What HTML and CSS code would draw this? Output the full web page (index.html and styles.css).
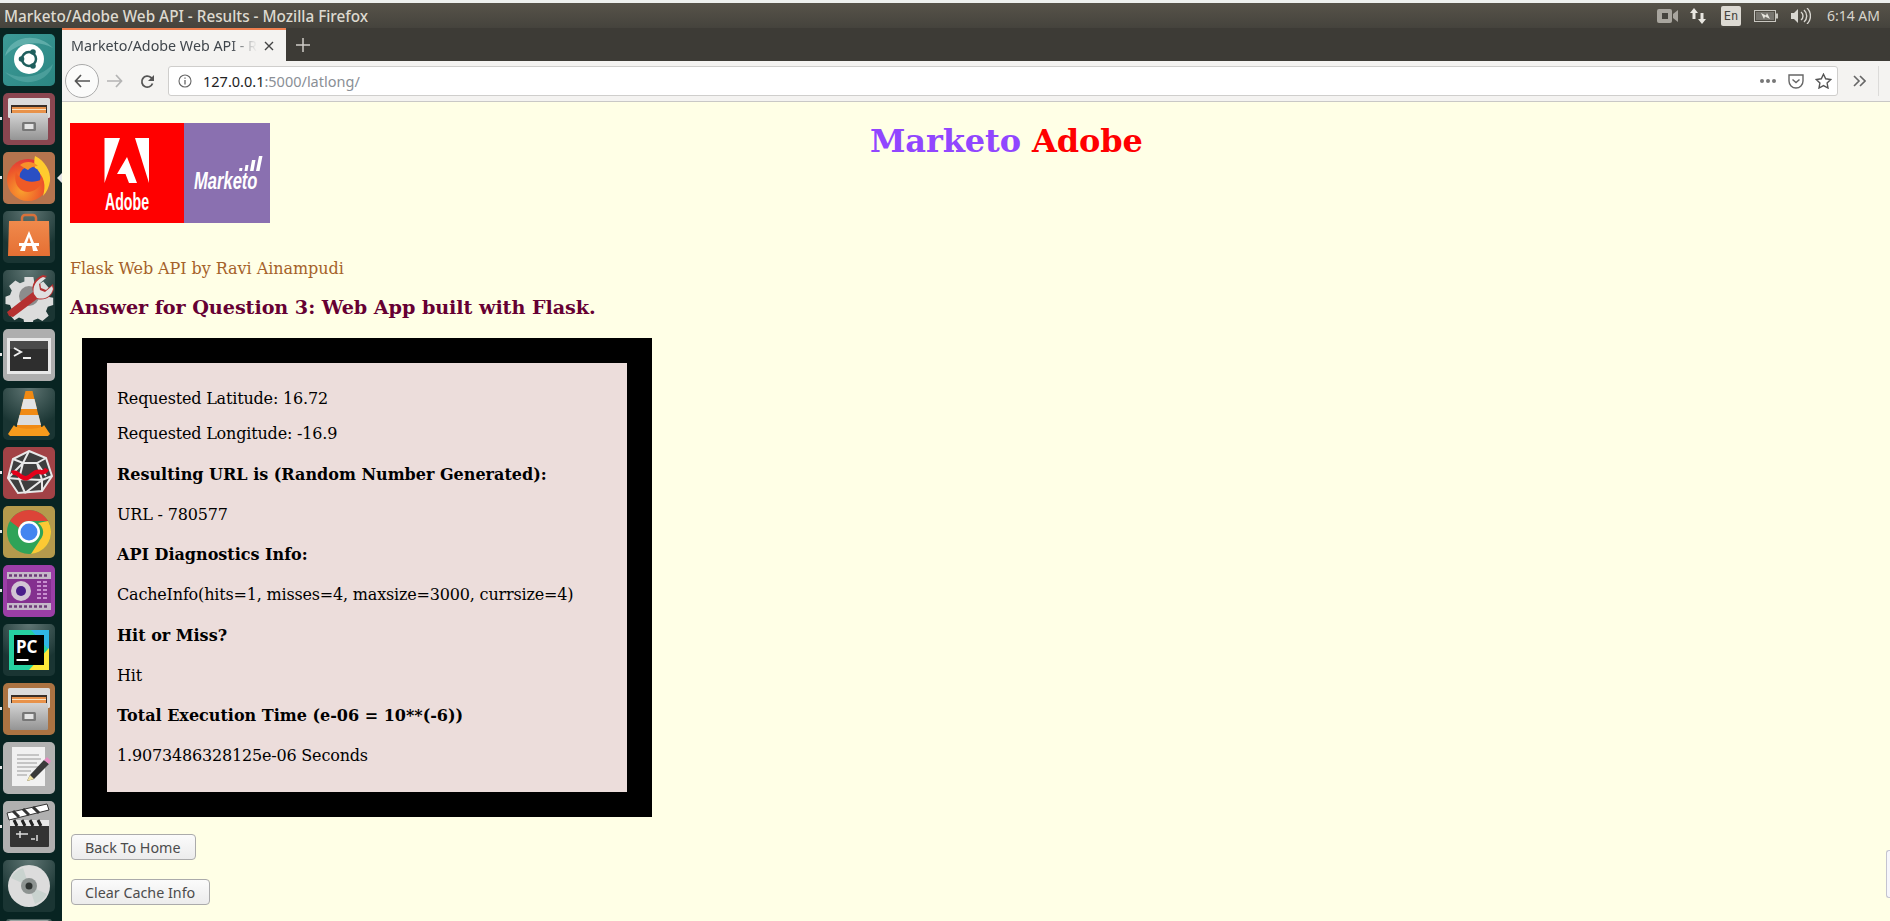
FILE: index.html
```html
<!DOCTYPE html>
<html lang="en">
<head>
<meta charset="utf-8">
<title>Marketo/Adobe Web API - Results</title>
<link rel="stylesheet" href="styles.css">
</head>
<body>
<svg class="defs" width="0" height="0" aria-hidden="true">
  <defs>
    <radialGradient id="glow" cx="50%" cy="0%" r="75%"><stop offset="0" stop-color="#5f7573"/><stop offset="1" stop-color="#1a3533"/></radialGradient>
    <radialGradient id="fox" cx="35%" cy="75%" r="80%"><stop offset="0" stop-color="#f9a12e"/><stop offset=".6" stop-color="#ee5a2a"/><stop offset="1" stop-color="#e0303a"/></radialGradient>
    <linearGradient id="cab" x1="0" y1="0" x2="0" y2="1"><stop offset="0" stop-color="#d4d4d4"/><stop offset="1" stop-color="#949494"/></linearGradient>
    <linearGradient id="teal" x1="0" y1="0" x2="1" y2="1"><stop offset="0" stop-color="#3d9a97"/><stop offset="1" stop-color="#2b8682"/></linearGradient>
    <linearGradient id="bag" x1="0" y1="0" x2="0" y2="1"><stop offset="0" stop-color="#f08a4c"/><stop offset="1" stop-color="#e56f33"/></linearGradient>
    <g id="cabinet">
      <rect x="5" y="5" width="42" height="20" rx="1.500" fill="#dcdcdc"/>
      <rect x="8" y="12" width="36" height="12" fill="#3b3029"/>
      <rect x="9" y="14" width="34" height="7" fill="#e8924a"/>
      <rect x="9" y="16" width="34" height="1" fill="#fbe3c2"/>
      <rect x="7" y="20" width="38" height="27" rx="1.500" fill="url(#cab)"/>
      <rect x="19" y="29" width="14" height="9" rx="1.500" fill="#777"/>
      <rect x="21.500" y="31" width="9" height="5" fill="#e4e4e4"/>
    </g>
  </defs>
</svg>

<header class="titlebar">
  <span class="wintitle">Marketo/Adobe Web API - Results - Mozilla Firefox</span>
  <div class="tray">
    <svg class="tray-cam" width="22" height="14" viewBox="0 0 22 14"><rect x="0" y="0" width="15" height="14" rx="2" fill="#a8a59e"/><rect x="5" y="4" width="6" height="6" fill="#45433e"/><path d="M16 5l5-4v12l-5-4z" fill="#a8a59e"/></svg>
    <svg class="tray-net" width="18" height="18" viewBox="0 0 18 18"><path d="M5 1l4 5H6.500v6h-3V6H1z" fill="#e8e6e0"/><path d="M13 17l-4-5h2.500V6h3v6H17z" fill="#e8e6e0"/></svg>
    <span class="tray-lang">En</span>
    <svg class="tray-bat" width="24" height="12" viewBox="0 0 24 12"><rect x=".5" y=".5" width="21" height="11" fill="none" stroke="#c8c6c0"/><rect x="2" y="2" width="18" height="8" fill="#77756f"/><rect x="22" y="3.500" width="2" height="5" fill="#c8c6c0"/><path d="M7 3l5 2.500 1-2.500 3 6-5-2.500-1 2.500z" fill="#e8e6e0"/></svg>
    <svg class="tray-vol" width="20" height="16" viewBox="0 0 20 16"><path d="M0 5h3l4-4v14l-4-4H0z" fill="#d8d6d0"/><path d="M10 4a5 5 0 0 1 0 8M13 2a8 8 0 0 1 0 12M16 0a11 11 0 0 1 0 16" fill="none" stroke="#d8d6d0" stroke-width="1.400"/></svg>
    <span class="clock">6:14 AM</span>
  </div>
</header>

<div class="desktop">
  <nav class="launcher">
    <div class="tile"><svg viewBox="0 0 52 52"><rect width="52" height="52" rx="5" fill="url(#teal)"/><path d="M2 22C6 4 32-4 50 14 36 6 14 8 2 22z" fill="#7fc2bf" opacity=".55"/><path d="M50 30C46 48 20 56 2 38 16 46 38 44 50 30z" fill="#7fc2bf" opacity=".35"/><circle cx="26" cy="25" r="15" fill="#fff"/><circle cx="26" cy="25" r="7" fill="none" stroke="#1f5f5e" stroke-width="2.500"/><circle cx="18.500" cy="25" r="2.800" fill="#1f5f5e"/><circle cx="30" cy="18" r="2.800" fill="#1f5f5e"/><circle cx="30" cy="32" r="2.800" fill="#1f5f5e"/></svg></div>
    <div class="tile pip"><svg viewBox="0 0 52 52"><rect width="52" height="52" rx="5" fill="#8a4650"/><use href="#cabinet"/></svg></div>
    <div class="tile pip active"><svg viewBox="0 0 52 52"><rect width="52" height="52" rx="5" fill="#b4744e"/><circle cx="25" cy="28" r="21" fill="url(#fox)"/><path d="M32 4c10 5 16 15 15 25-1 6-3 11-7 15 3-10 2-20-8-27-1-5-1-9 0-13z" fill="#ffcb2e"/><circle cx="27" cy="25" r="10.500" fill="#2a4fc4"/><path d="M13 20c4 8 14 13 27 7-3 11-14 16-22 11-5-4-7-11-5-18z" fill="#ef5a26"/><path d="M17 13c5-4 13-4 18 1-5 0-8 2-10 4-3-2-6-3-8-5z" fill="#f7902a"/></svg></div>
    <div class="tile"><svg viewBox="0 0 52 52"><rect width="52" height="52" rx="5" fill="url(#glow)"/><path d="M19 13V7a3 3 0 0 1 3-3h8a3 3 0 0 1 3 3v6" fill="none" stroke="#d9713a" stroke-width="2.500"/><path d="M6 10h40l1 35H5z" fill="url(#bag)"/><path d="M26 20l5 12h5v3h-3l2 5h-5l-1-5h-6l-1 5h-5l2-5h-3v-3h5zM26 26l-2 6h4z" fill="#fff"/></svg></div>
    <div class="tile"><svg viewBox="0 0 52 52"><rect width="52" height="52" rx="5" fill="url(#glow)"/><path d="M21 5h10l1 6 5 2 5-3 6 7-3 5 2 5 6 1v8l-6 2-2 5 3 5-7 6-5-3-5 2-1 4H21l-1-5-5-2-5 3-6-7 3-5-2-5-5-1V27l5-2 2-5-3-5 7-6 5 3 5-2z" fill="#dcdcdc" transform="translate(2.500 2.500) scale(.9)"/><circle cx="26" cy="26" r="10" fill="#8c8c8c"/><path d="M6 46l-2-4 26-20c-2-7 2-14 10-17l4 1-7 6 1 6 5 2 7-6 1 5c-2 8-9 12-17 10L10 47z" fill="#b53030"/><path d="M31 24c-2-7 2-14 9-17l3 1-7 6 1 6 5 2 7-6 1 3c-2 8-9 11-16 9z" fill="#e0e0e0"/></svg></div>
    <div class="tile pip"><svg viewBox="0 0 52 52"><rect width="52" height="52" rx="5" fill="#aeaeae"/><rect x="4" y="9" width="44" height="36" fill="#e8e8e8"/><rect x="7" y="12" width="38" height="30" fill="#2e2e2e"/><rect x="7" y="12" width="38" height="8" fill="#4a4a4a"/><path d="M11 19l7 4-7 4" fill="none" stroke="#eee" stroke-width="2"/><rect x="20" y="28" width="8" height="2" fill="#eee"/></svg></div>
    <div class="tile"><svg viewBox="0 0 52 52"><rect width="52" height="52" rx="5" fill="url(#glow)"/><path d="M22.500 3h7L39 42H13z" fill="#f08a14"/><path d="M20.500 11h11l2.500 10H18z" fill="#e4e4e4"/><path d="M16.500 27h19l2.500 10H14z" fill="#dcdcdc"/><path d="M11 37l-6 9 2 2h38l2-2-6-9c-2 5-28 5-30 0z" fill="#f79a1c"/></svg></div>
    <div class="tile pip"><svg viewBox="0 0 52 52"><rect width="52" height="52" rx="5" fill="#a24246"/><path d="M26 4l17 7 6 18-10 15-24 2L5 31l5-19z" fill="#3e3e3e" stroke="#e8e8e8" stroke-width="2"/><path d="M26 4l-6 12-10-4m10 4l-15 15m15-15l14 0 9 13M34 16l9-5M20 16l-4 16 6 14M16 32l-11-1M34 16l5 17-17 13M39 33l10-4M39 33v11M16 32l23 1" fill="none" stroke="#e8e8e8" stroke-width="2"/><path d="M9 26c6-3 8 7 15 5 6-2 7-8 13-6 3 1 5 0 7-3" fill="none" stroke="#e4001a" stroke-width="4.500"/></svg></div>
    <div class="tile pip"><svg viewBox="0 0 52 52"><rect width="52" height="52" rx="5" fill="#b49a4c"/><circle cx="26" cy="26" r="22" fill="#2fa358"/><path d="M7 15A22 22 0 0 1 45 15H26a11 11 0 0 0-10 7z" fill="#dc4438"/><path d="M45 15a22 22 0 0 1-17 33l9-14a11 11 0 0 0-2-17z" fill="#fcc934"/><circle cx="26" cy="26" r="11" fill="#fff"/><circle cx="26" cy="26" r="8.500" fill="#4285f0"/></svg></div>
    <div class="tile pip"><svg viewBox="0 0 52 52"><rect width="52" height="52" rx="5" fill="#9b3ea6"/><rect x="4" y="7" width="44" height="38" rx="2" fill="#84308f"/><rect x="4" y="7" width="44" height="7" fill="#c4b8c8"/><rect x="4" y="38" width="44" height="7" fill="#c4b8c8"/><path d="M6 10.500h40M6 41.500h40" stroke="#6d3a78" stroke-width="2.500" stroke-dasharray="3 2"/><circle cx="18" cy="26" r="10" fill="#d2c6d4"/><circle cx="18" cy="26" r="5" fill="#4a1f8a"/><path d="M34 17h4M34 21h4M34 25h4M34 29h4M34 33h4M40 17h4M40 21h4M40 25h4M40 29h4M40 33h4" stroke="#c88ed0" stroke-width="2"/></svg></div>
    <div class="tile"><svg viewBox="0 0 52 52"><rect width="52" height="52" rx="5" fill="url(#glow)"/><rect x="6" y="6" width="40" height="40" fill="#26d0a0"/><path d="M28 6h18v20z" fill="#2fb6e8"/><path d="M26 46h20V24z" fill="#fde83a"/><rect x="11" y="11" width="30" height="30" fill="#000"/><text class="pc" x="13" y="29">PC</text><rect x="13.500" y="35" width="12" height="2" fill="#fff"/></svg></div>
    <div class="tile pip"><svg viewBox="0 0 52 52"><rect width="52" height="52" rx="5" fill="#ab7342"/><use href="#cabinet"/></svg></div>
    <div class="tile pip"><svg viewBox="0 0 52 52"><rect width="52" height="52" rx="5" fill="#b2b2b2"/><path d="M9 5h33v39H9z" fill="#f1f1f1"/><path d="M14 13h22M14 17h24M14 21h20M14 25h22M14 29h14M14 33h10" stroke="#999" stroke-width="1"/><path d="M24 39l3-6 14-15 5 4-15 15z" fill="#3a3a3a"/><path d="M41 18l3-3 4 4-2 3z" fill="#e48cc0"/><path d="M24 39l3-6 4 4z" fill="#f1e3a6"/></svg></div>
    <div class="tile pip"><svg viewBox="0 0 52 52"><rect width="52" height="52" rx="5" fill="#b0b0b0"/><path d="M4 12l40-9 2 6-40 10z" fill="#fff" stroke="#333"/><path d="M10 10l6 6M20 8l6 6M30 6l6 6" stroke="#333" stroke-width="3"/><rect x="7" y="19" width="39" height="27" rx="1" fill="#333"/><path d="M7 19h39v6H7z" fill="#e8e8e8"/><path d="M11 19l3 6M19 19l3 6M27 19l3 6M35 19l3 6" stroke="#222" stroke-width="3"/><path d="M13 33h12M17 30v7M28 38h4M34 34v6" stroke="#ddd" stroke-width="1.500"/></svg></div>
    <div class="tile"><svg viewBox="0 0 52 52"><rect width="52" height="52" rx="5" fill="url(#glow)"/><circle cx="26" cy="26" r="21" fill="#dcdcdc"/><path d="M26 26L8 18a21 21 0 0 1 12-10zM26 26l18 8a21 21 0 0 1-12 10z" fill="#c9d3cf"/><circle cx="26" cy="26" r="8" fill="#8d9391"/><circle cx="26" cy="26" r="3.500" fill="#2e3331"/></svg></div>
    <div class="tile tile-cut"><svg viewBox="0 0 46 8"><rect width="46" height="8" rx="3" fill="#4d6260"/><rect x="3" y="1" width="40" height="7" rx="2" fill="#9aa3a1"/></svg></div>
  </nav>

  <div class="browser">
    <div class="tabbar">
      <div class="tab">
        <span class="tab-label">Marketo/Adobe Web API - R</span>
        <svg class="tab-close" width="10" height="10" viewBox="0 0 10 10"><path d="M1 1l8 8M9 1l-8 8" stroke="#444" stroke-width="1.400"/></svg>
      </div>
      <svg class="newtab" width="14" height="14" viewBox="0 0 14 14"><path d="M7 0v14M0 7h14" stroke="#cfcdc8" stroke-width="1.500"/></svg>
    </div>
    <div class="navbar">
      <span class="back"><svg width="16" height="14" viewBox="0 0 16 14"><path d="M7 1L1.500 7 7 13M2 7h14" fill="none" stroke="#555" stroke-width="1.700"/></svg></span>
      <svg class="forward" width="16" height="14" viewBox="0 0 16 14"><path d="M9 1l5.500 6L9 13M14 7H0" fill="none" stroke="#b4b4b4" stroke-width="1.700"/></svg>
      <svg class="reload" width="15" height="15" viewBox="0 0 15 15"><path d="M12.500 9.500A5.500 5.500 0 1 1 11 3.500L13 5" fill="none" stroke="#555" stroke-width="1.800"/><path d="M14 1v6H8z" fill="#555"/></svg>
      <div class="urlbar">
        <svg class="info" width="14" height="14" viewBox="0 0 14 14"><circle cx="7" cy="7" r="6" fill="none" stroke="#666" stroke-width="1.100"/><path d="M7 6v4.500M7 3.500v1.300" stroke="#666" stroke-width="1.300"/></svg>
        <span class="url"><span class="url-host">127.0.0.1</span>:5000/latlong/</span>
        <span class="dots"><i></i><i></i><i></i></span>
        <svg class="pocket" width="16" height="15" viewBox="0 0 16 15"><path d="M1 1h14v6a7 7 0 0 1-14 0z" fill="none" stroke="#666" stroke-width="1.400"/><path d="M4.500 5.500L8 8.500l3.500-3" fill="none" stroke="#666" stroke-width="1.500"/></svg>
        <svg class="star" width="17" height="16" viewBox="0 0 17 16"><path d="M8.500 1.200l2.200 4.600 5 .7-3.600 3.500.9 5-4.500-2.400L4 15l.9-5L1.300 6.500l5-.7z" fill="none" stroke="#555" stroke-width="1.400"/></svg>
      </div>
      <svg class="overflow" width="13" height="12" viewBox="0 0 13 12"><path d="M1 1l5 5-5 5M7 1l5 5-5 5" fill="none" stroke="#666" stroke-width="1.600"/></svg>
      <span class="nav-sep"></span>
    </div>

    <main class="page">
      <div class="head">
        <svg class="logo" width="200" height="100" viewBox="0 0 200 100">
          <rect width="115" height="100" fill="#ff0000"/>
          <rect x="114" width="86" height="100" fill="#8a70b0"/>
          <path d="M34.500 15H50L34.500 60z" fill="#fff"/>
          <path d="M65 15h14v45z" fill="#fff"/>
          <path d="M57 34l10 26h-8l-3.500-9H47z" fill="#fff"/>
          <text class="logo-adobe" transform="translate(35 87) scale(.59 1)">Adobe</text>
          <text class="logo-marketo" transform="translate(124 66) scale(.72 1)">Marketo</text>
          <path d="M169 48l.5-3h3l-.5 3zM174.500 48l1-6h3l-1 6zM180 48l2-11h3.500l-2 11zM186 48l3-15h3.500l-3 15z" fill="#fff"/>
        </svg>
        <h1 class="brand"><span class="brand-m">Marketo</span> <span class="brand-a">Adobe</span></h1>
      </div>
      <p class="byline">Flask Web API by Ravi Ainampudi</p>
      <h3 class="question">Answer for Question 3: Web App built with Flask.</h3>
      <section class="result">
        <p>Requested Latitude: 16.72</p>
        <p>Requested Longitude: -16.9</p>
        <h4>Resulting URL is (Random Number Generated):</h4>
        <p>URL - 780577</p>
        <h4>API Diagnostics Info:</h4>
        <p>CacheInfo(hits=1, misses=4, maxsize=3000, currsize=4)</p>
        <h4>Hit or Miss?</h4>
        <p>Hit</p>
        <h4>Total Execution Time (e-06 = 10**(-6))</h4>
        <p>1.9073486328125e-06 Seconds</p>
      </section>
      <div class="actions">
        <button class="btn" type="button">Back To Home</button>
        <button class="btn" type="button">Clear Cache Info</button>
      </div>
      <span class="edge"></span>
    </main>
  </div>
</div>
</body>
</html>
```
FILE: styles.css
```css
* { box-sizing: border-box; }
html, body { margin: 0; height: 921px; overflow: hidden; }
body { background: #eef0ee; display: flex; flex-direction: column; padding-top: 3px; font-family: "DejaVu Serif", serif; }
.defs { position: absolute; }

.titlebar { height: 25px; flex: none; display: flex; align-items: center; justify-content: space-between; padding: 0 10px 0 4px; background: linear-gradient(#575349, #45433d); color: #dedad0; font: 500 15.300px "Noto Sans", sans-serif; }
.tray { display: flex; align-items: center; }
.tray-cam { margin-right: 10px; }
.tray-net { margin-right: 14px; }
.tray-lang { width: 20px; height: 20px; background: #dcd9d2; color: #45433d; font: 500 12px "DejaVu Sans Mono", monospace; display: flex; align-items: center; justify-content: center; border-radius: 2px; margin-right: 13px; }
.tray-bat { margin-right: 13px; }
.tray-vol { margin-right: 16px; }
.clock { font: 400 14px "Noto Sans", sans-serif; color: #d8d5cc; }

.desktop { flex: 1; display: flex; min-height: 0; }
.launcher { width: 62px; flex: none; background: #082422; padding: 6px 0 0 3px; display: flex; flex-direction: column; gap: 7px; overflow: hidden; position: relative; }
.tile { width: 52px; height: 52px; flex: none; position: relative; }
.tile svg { display: block; width: 52px; height: 52px; }
.tile-cut { margin-left: 3px; width: 46px; height: 8px; }
.tile-cut svg { width: 46px; height: 8px; }
.pip::before { content: ""; position: absolute; left: -3px; top: 24px; border-left: 2px solid #e8e8e8; height: 3px; }
.active::after { content: ""; position: absolute; left: 54px; top: 21px; border: 5px solid transparent; border-right: 5px solid #e6e6e6; border-left: 0; }
.pc { font: 700 17px "Noto Sans", sans-serif; fill: #fff; }

.browser { flex: 1; min-width: 0; display: flex; flex-direction: column; }
.tabbar { height: 33px; flex: none; background: #3d3b36; display: flex; align-items: center; }
.tab { width: 224px; height: 33px; background: #f4f3f1; border-top: 2px solid #f08050; display: flex; align-items: center; padding-left: 9px; color: #40464c; font: 400 14.300px "Noto Sans", sans-serif; position: relative; }
.tab-label { width: 186px; white-space: nowrap; overflow: hidden; -webkit-mask-image: linear-gradient(to right, #000 86%, transparent 100%); mask-image: linear-gradient(to right, #000 86%, transparent 100%); }
.tab-close { margin-left: 7px; }
.newtab { margin-left: 10px; }
.navbar { height: 41px; flex: none; background: #f4f3f1; border-bottom: 1px solid #c9c8c6; display: flex; align-items: center; padding-left: 3px; }
.back { width: 34px; height: 34px; border: 1px solid #aaa; border-radius: 50%; background: #fbfbfa; display: flex; align-items: center; justify-content: center; }
.forward { margin-left: 8px; }
.reload { margin-left: 17px; }
.urlbar { width: 1670px; height: 30px; margin-left: 13px; background: #fff; border: 1px solid #cfcecc; border-radius: 3px; display: flex; align-items: center; padding-left: 9px; }
.url { margin-left: 11px; font: 400 14.500px "Noto Sans", sans-serif; color: #8a8f96; flex: 1; }
.url-host { color: #222; }
.dots { display: flex; gap: 2px; margin-right: 12px; }
.dots i { width: 4px; height: 4px; border-radius: 50%; background: #777; }
.pocket { margin-right: 11px; }
.star { margin-right: 5px; }
.overflow { margin-left: 15px; }
.nav-sep { width: 1px; height: 30px; margin-left: 12px; background: #dcdbd9; }

.page { flex: 1; background: #ffffe6; padding: 21px 8px 0; position: relative; overflow: hidden; color: #000; font-size: 16px; }
.head { display: flex; height: 100px; align-items: flex-start; }
.logo { display: block; flex: none; }
.logo-adobe { font: 700 24px "Liberation Sans", sans-serif; fill: #fff; }
.logo-marketo { font: italic 700 23px "Liberation Sans", sans-serif; fill: #fff; }
.brand { margin: -1px 0 0 600px; font-size: 32px; font-weight: 700; line-height: 38px; letter-spacing: -.1px; white-space: nowrap; }
.brand-m { color: #9146ff; }
.brand-a { color: #ff0000; }
.byline { margin: 36px 0 0; color: #a5622a; line-height: 19px; letter-spacing: -.06px; }
.question { margin: 19px 0 0; font-size: 19.200px; line-height: 22px; letter-spacing: -.07px; color: #660033; }
.result { margin: 19px 0 0 12px; width: 570px; height: 479px; border: 25px solid #000; background: #ecdddb; padding: 10px; }
.result p { margin: 16px 0; line-height: 19px; letter-spacing: -.18px; }
.result h4 { margin: 21.280px 0; font-size: 16px; line-height: 19px; position: relative; top: .5px; }
.actions { margin: 17px 0 0 1px; display: flex; flex-direction: column; align-items: flex-start; gap: 19px; }
.btn { height: 26px; padding: 0 14px 0 13px; border: 1px solid #ababab; border-radius: 4px; background: linear-gradient(#fbfbfb, #ececec); color: #4c4c4c; font: 400 14.300px "Noto Sans", sans-serif; }
.edge { position: absolute; right: 0; bottom: 23px; width: 4px; height: 48px; background: #f6f6fb; border: 1px solid #c4c4d0; border-right: 0; border-radius: 3px 0 0 3px; }
```
